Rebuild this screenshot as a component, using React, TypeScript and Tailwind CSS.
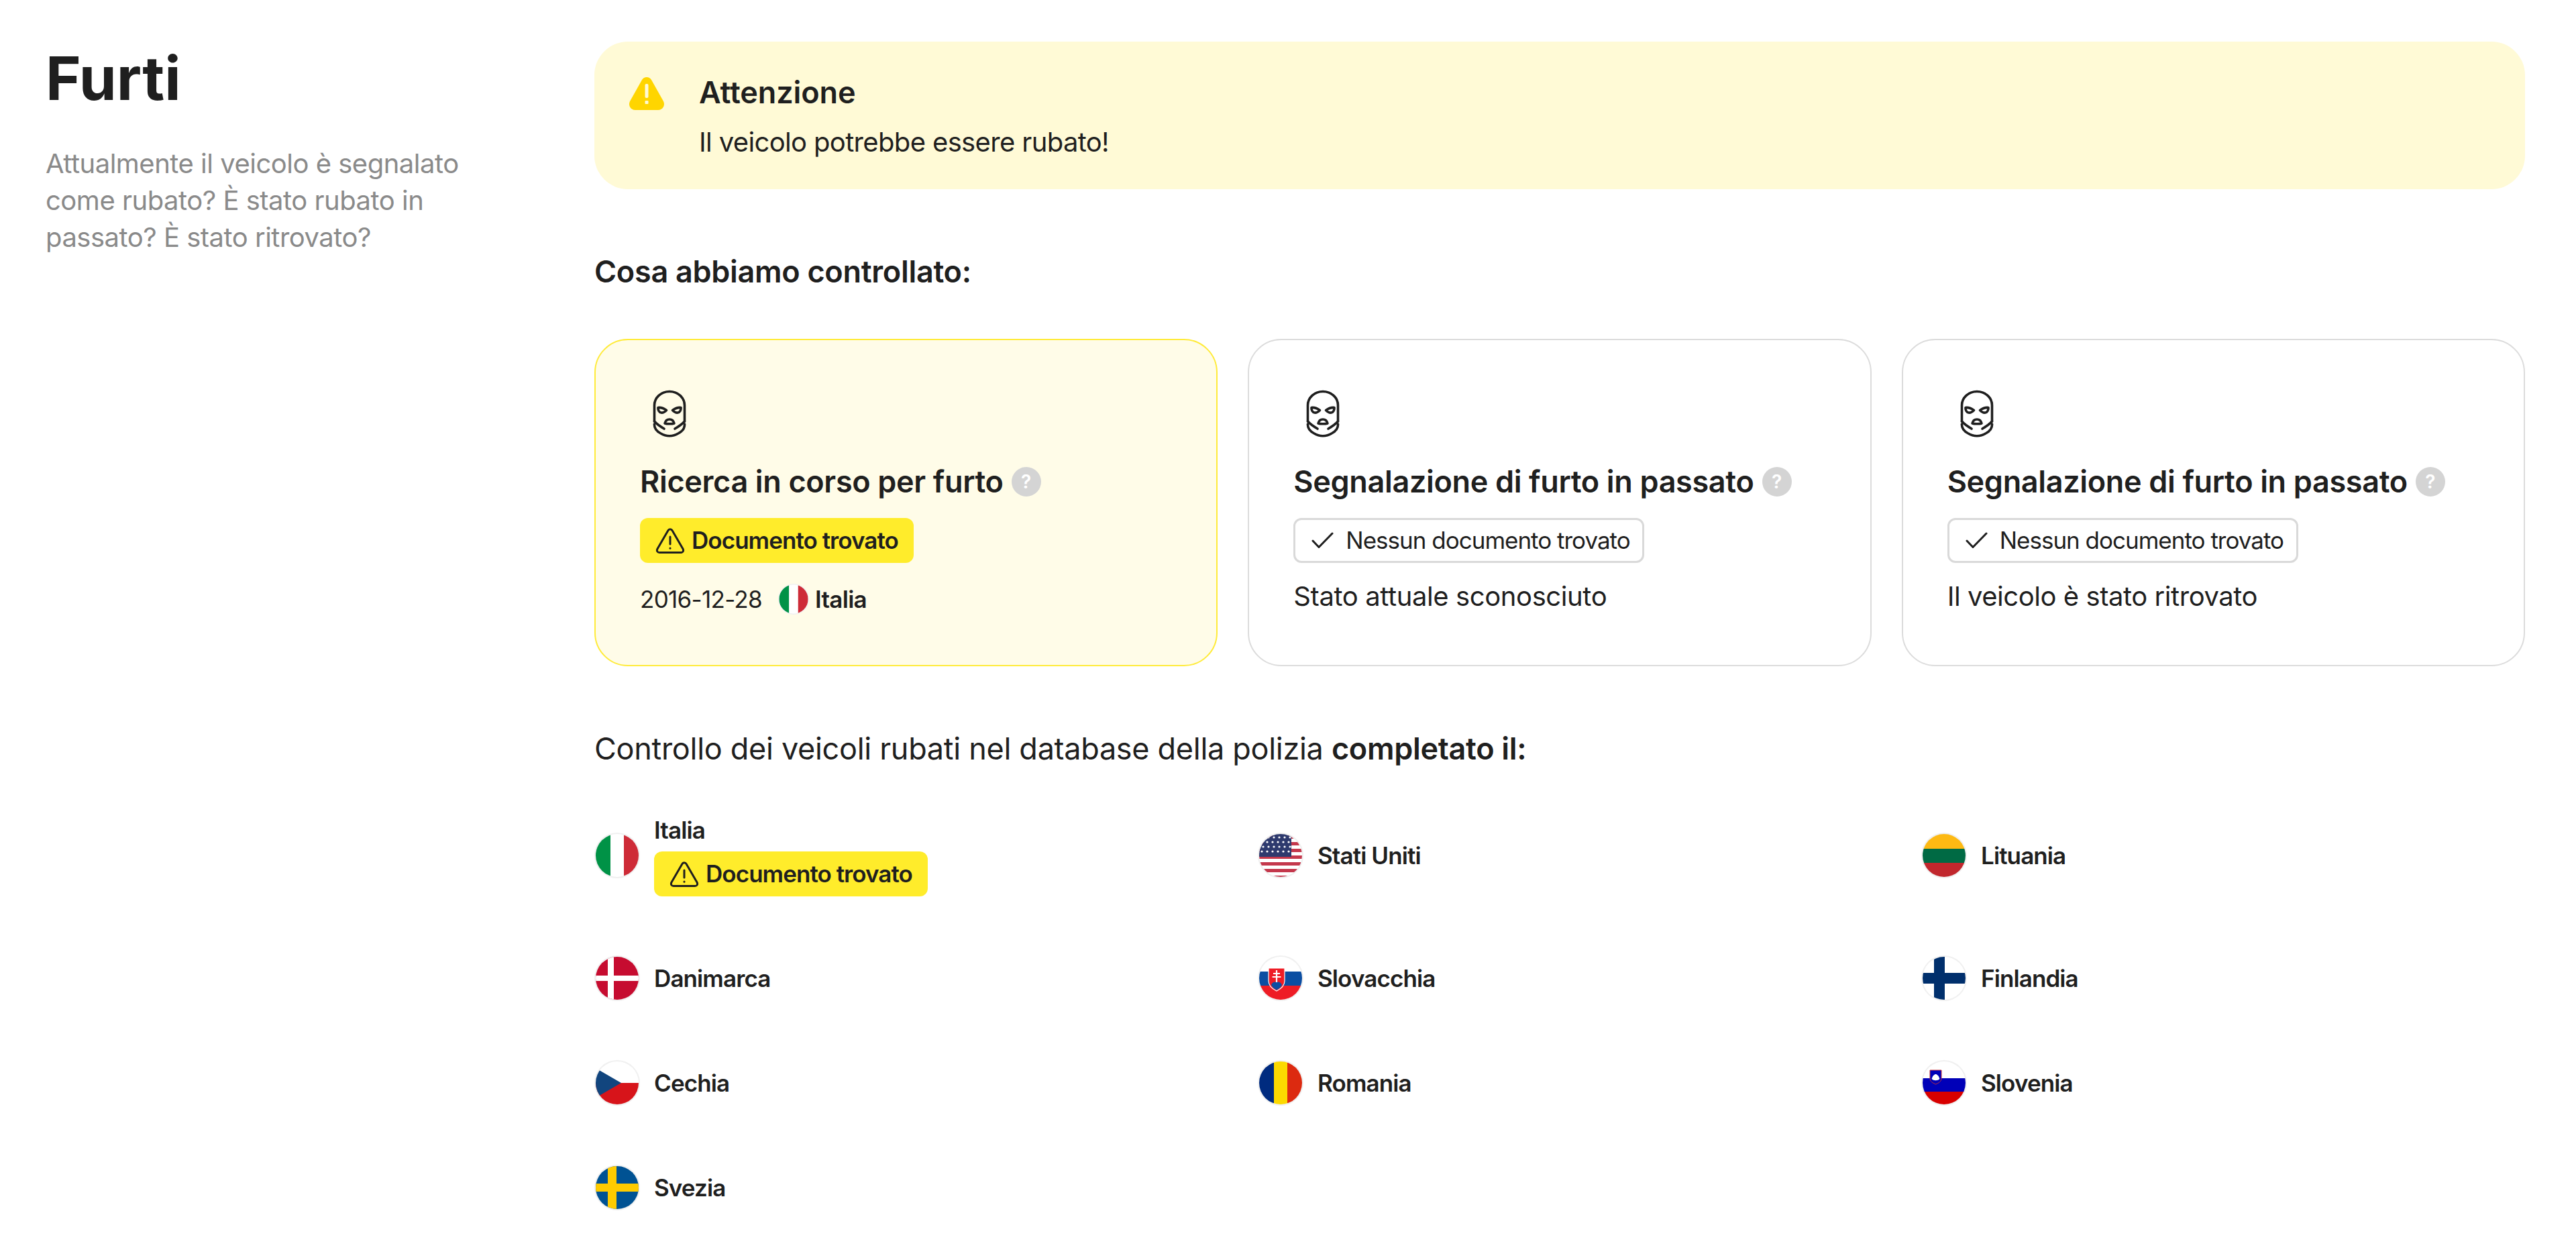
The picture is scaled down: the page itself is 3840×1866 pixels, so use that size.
import React from 'react';

const INK = '#1f1f1f';

const MaskIcon: React.FC = () => (
  <svg width="50" height="72" viewBox="0 0 50 72" fill="none" stroke={INK} strokeWidth="3.600" strokeLinecap="round" strokeLinejoin="round" className="ml-[19px]">
    <path d="M2.500 47V23C2.500 12 12 2.500 25 2.500S47.500 12 47.500 23V47" />
    <path d="M2.500 47C6 51 12 55 17 58M47.500 47C44 51 38 55 33 58" />
    <path d="M2.500 51C2 58 6 62 12 65C20 70 30 70 38 65C44 62 48 58 47.500 51" />
    <path d="M8 26.500C12 26 17 28 20.500 30.500C18 33 15 34.500 12.500 34C9.500 33.500 7.500 30 8 26.500Z" />
    <path d="M42 26.500C38 26 33 28 29.500 30.500C32 33 35 34.500 37.500 34C40.500 33.500 42.500 30 42 26.500Z" />
    <path d="M18 50C19 46 22 44 25 44C28 44 31 46 32 50C29 51 21 51 18 50Z" />
  </svg>
);

const WarnOutline: React.FC = () => (
  <svg width="44" height="40" viewBox="0 0 44 40" fill="none" stroke={INK} strokeWidth="3" strokeLinecap="round" strokeLinejoin="round" className="shrink-0">
    <path d="M19 4.500C20.300 2 23.700 2 25 4.500L41 32C42.500 35 41 37.500 38 37.500H6C3 37.500 1.500 35 3 32Z" />
    <path d="M22 14V25" />
    <path d="M22 31V31.200" />
  </svg>
);

const FoundBadge: React.FC = () => (
  <div className="flex h-[67px] w-[408px] items-center gap-[10px] whitespace-nowrap rounded-[12px] bg-[#ffec2b] pl-[23px] text-[35px] font-semibold tracking-[-0.95px]">
    <WarnOutline />
    <span>Documento trovato</span>
  </div>
);

const NotFoundBadge: React.FC = () => (
  <div className="flex h-[67px] w-[523px] items-center gap-[18px] whitespace-nowrap rounded-[12px] border-[3px] border-[#d9d9d9] bg-white pl-[24px] text-[35px] tracking-[-1px]">
    <svg width="33" height="25" viewBox="0 0 33 25" fill="none" stroke={INK} strokeWidth="3" strokeLinecap="round" strokeLinejoin="round" className="shrink-0">
      <path d="M2 13L11 22.500L31 2" />
    </svg>
    <span>Nessun documento trovato</span>
  </div>
);

const Help: React.FC = () => (
  <span className="flex h-[44px] w-[44px] shrink-0 items-center justify-center rounded-full bg-[#d4d4d4] text-[28px] font-semibold tracking-normal text-white">?</span>
);

const flagBits: Record<string, React.ReactNode> = {
  it: (
    <>
      <rect width="11" height="32" fill="#009246" />
      <rect x="11" width="10" height="32" fill="#fff" />
      <rect x="21" width="11" height="32" fill="#ce2b37" />
    </>
  ),
  dk: (
    <>
      <rect width="32" height="32" fill="#c60c30" />
      <rect x="9" width="4.500" height="32" fill="#fff" />
      <rect y="14" width="32" height="4" fill="#fff" />
    </>
  ),
  cz: (
    <>
      <rect width="32" height="16" fill="#fff" />
      <rect y="16" width="32" height="16" fill="#d7141a" />
      <path d="M0 5L19 16L0 27Z" fill="#11457e" />
    </>
  ),
  se: (
    <>
      <rect width="32" height="32" fill="#005293" />
      <rect x="9" width="6.500" height="32" fill="#fecb00" />
      <rect y="13" width="32" height="6" fill="#fecb00" />
    </>
  ),
  us: (
    <>
      <rect width="32" height="32" fill="#fff" />
      {[1, 6, 11, 16, 21, 26, 31].map((y) => (
        <rect key={y} y={y} width="32" height="2.500" fill="#c4384c" />
      ))}
      <rect width="24" height="17" fill="#2e3a6e" />
      {[2.500, 6, 9.500, 13].map((y, r) =>
        [3, 7, 11, 15, 19, 23].map((x) => <circle key={`${x}-${y}`} cx={x - (r % 2)} cy={y} r="0.800" fill="#fff" />),
      )}
    </>
  ),
  sk: (
    <>
      <rect width="32" height="11" fill="#fff" />
      <rect y="11" width="32" height="10.500" fill="#0b4ea2" />
      <rect y="21.500" width="32" height="10.500" fill="#ee1c25" />
      <path d="M7 8.500H19V18C19 22 16 24 13 25.500C10 24 7 22 7 18Z" fill="#ee1c25" stroke="#fff" strokeWidth="0.600" />
      <path d="M9 21C10 18.500 12 18.500 13 19C14 18.500 16 18.500 17 21C16 23 14.500 24 13 24.800C11.500 24 10 23 9 21Z" fill="#0b4ea2" />
      <path d="M13 10V19M10.500 12.500H15.500M9.800 15H16.200" stroke="#fff" strokeWidth="1.100" />
    </>
  ),
  ro: (
    <>
      <rect width="11" height="32" fill="#002b7f" />
      <rect x="11" width="10" height="32" fill="#fcd900" />
      <rect x="21" width="11" height="32" fill="#dc2a10" />
    </>
  ),
  lt: (
    <>
      <rect width="32" height="11" fill="#fdb913" />
      <rect y="11" width="32" height="10.500" fill="#006a44" />
      <rect y="21.500" width="32" height="10.500" fill="#c1272d" />
    </>
  ),
  fi: (
    <>
      <rect width="32" height="32" fill="#fff" />
      <rect x="8.500" width="8" height="32" fill="#002f6c" />
      <rect y="12" width="32" height="8" fill="#002f6c" />
    </>
  ),
  si: (
    <>
      <rect width="32" height="12.500" fill="#fff" />
      <rect y="12.500" width="32" height="10" fill="#0000b8" />
      <rect y="22.500" width="32" height="9.500" fill="#d80000" />
      <path d="M5.500 6.500H14V12.500C14 15 12 16 9.750 17C7.500 16 5.500 15 5.500 12.500Z" fill="#0000b8" stroke="#c0303a" strokeWidth="0.500" />
      <path d="M6.800 13C7.500 10.500 8.800 9.500 9.750 9.500C10.700 9.500 12 10.500 12.700 13C11.500 14.500 8 14.500 6.800 13Z" fill="#fff" />
    </>
  ),
};

const Flag: React.FC<{ code: string; small?: boolean }> = ({ code, small }) => {
  const clipId = `clip-${code}-${small ? 's' : 'l'}`;
  return (
    <svg viewBox="0 0 34 34" className={small ? 'h-[46px] w-[46px] shrink-0' : 'h-[68px] w-[68px] shrink-0'}>
      <defs>
        <clipPath id={clipId}>
          <circle cx="17" cy="17" r="16" />
        </clipPath>
      </defs>
      <circle cx="17" cy="17" r="17" fill="#f0f0f0" />
      <g clipPath={`url(#${clipId})`}>
        <g transform="translate(1 1)">{flagBits[code]}</g>
      </g>
    </svg>
  );
};

const countries = [
  { code: 'it', name: 'Italia', found: true },
  { code: 'us', name: 'Stati Uniti' },
  { code: 'lt', name: 'Lituania' },
  { code: 'dk', name: 'Danimarca' },
  { code: 'sk', name: 'Slovacchia' },
  { code: 'fi', name: 'Finlandia' },
  { code: 'cz', name: 'Cechia' },
  { code: 'ro', name: 'Romania' },
  { code: 'si', name: 'Slovenia' },
  { code: 'se', name: 'Svezia' },
];

const App: React.FC = () => {
  return (
    <div className="flex min-h-[1866px] bg-white pb-[60px] pl-[68px] pr-[76px] pt-[62px] font-[Inter,sans-serif] text-[#1f1f1f]">
      <aside className="w-[818px] shrink-0">
        <h1 className="text-[90px] font-bold leading-[110px]">Furti</h1>
        <p className="mt-[44px] max-w-[650px] text-[40px] leading-[55px] tracking-[-0.5px] text-[#8a8a8a]">
          Attualmente il veicolo è segnalato come rubato? È stato rubato in passato? È stato ritrovato?
        </p>
      </aside>

      <main className="min-w-0 flex-1">
        <div className="flex h-[220px] gap-[50px] rounded-[50px] bg-[#fffad6] pl-[50px] pt-[45px]">
          <svg width="56" height="52" viewBox="0 0 56 52" className="mt-[6px] shrink-0">
            <path d="M21 6C24 0.500 32 0.500 35 6L53 38C56 44 52 51 45 51H11C4 51 0 44 3 38Z" fill="#ffd500" />
            <rect x="25.500" y="12" width="5" height="21" rx="2" fill="#fffad6" />
            <rect x="25.500" y="37" width="5" height="5" rx="1" fill="#fffad6" />
          </svg>
          <div>
            <h2 className="text-[45px] font-semibold leading-[62px] tracking-[-0.1px]">Attenzione</h2>
            <p className="mt-[15px] text-[40px] leading-[55px] tracking-[-0.65px]">Il veicolo potrebbe essere rubato!</p>
          </div>
        </div>

        <h3 className="mt-[92px] text-[45px] font-semibold leading-[62px] tracking-[-0.3px]">Cosa abbiamo controllato:</h3>

        <div className="mt-[69px] grid grid-cols-3 gap-[45px]">
          <div className="h-[488px] rounded-[50px] border-[2px] border-[#ffeb3b] bg-[#fffce8] pl-[66px] pt-[74px]">
            <MaskIcon />
            <div className="mt-[34px] flex h-[62px] items-center gap-[12px] text-[45px] font-semibold tracking-[-0.35px]">
              <span>Ricerca in corso per furto</span>
              <Help />
            </div>
            <div className="mt-[23px]">
              <FoundBadge />
            </div>
            <div className="mt-[29px] flex h-[50px] items-center text-[35px] tracking-[-0.7px]">
              <span>2016-12-28</span>
              <span className="ml-[24px] mr-[9px] flex">
                <Flag code="it" small />
              </span>
              <span className="font-semibold">Italia</span>
            </div>
          </div>

          <div className="h-[488px] rounded-[50px] border-[2px] border-[#dcdcdc] bg-white pl-[66px] pt-[74px]">
            <MaskIcon />
            <div className="mt-[34px] flex h-[62px] items-center gap-[12px] text-[45px] font-semibold tracking-[-0.35px]">
              <span>Segnalazione di furto in passato</span>
              <Help />
            </div>
            <div className="mt-[23px]">
              <NotFoundBadge />
            </div>
            <p className="mt-[22px] text-[40px] leading-[55px] tracking-[-0.4px]">Stato attuale sconosciuto</p>
          </div>

          <div className="h-[488px] rounded-[50px] border-[2px] border-[#dcdcdc] bg-white pl-[66px] pt-[74px]">
            <MaskIcon />
            <div className="mt-[34px] flex h-[62px] items-center gap-[12px] text-[45px] font-semibold tracking-[-0.35px]">
              <span>Segnalazione di furto in passato</span>
              <Help />
            </div>
            <div className="mt-[23px]">
              <NotFoundBadge />
            </div>
            <p className="mt-[22px] text-[40px] leading-[55px] tracking-[-0.45px]">Il veicolo è stato ritrovato</p>
          </div>
        </div>

        <p className="mt-[92px] text-[45px] leading-[62px] tracking-[-0.3px]">
          Controllo dei veicoli rubati nel database della polizia <strong className="font-semibold">completato il:</strong>
        </p>

        <div className="mt-[66px] grid grid-cols-[989px_989px_1fr] gap-y-[88px]">
          {countries.map((c) => (
            <div key={c.code} className="flex items-center gap-[21px]">
              <Flag code={c.code} />
              <div>
                <div className="text-[35px] font-semibold leading-[48px] tracking-[-0.9px]">{c.name}</div>
                {c.found && (
                  <div className="mt-[8px]">
                    <FoundBadge />
                  </div>
                )}
              </div>
            </div>
          ))}
        </div>
      </main>
    </div>
  );
};

export default App;
